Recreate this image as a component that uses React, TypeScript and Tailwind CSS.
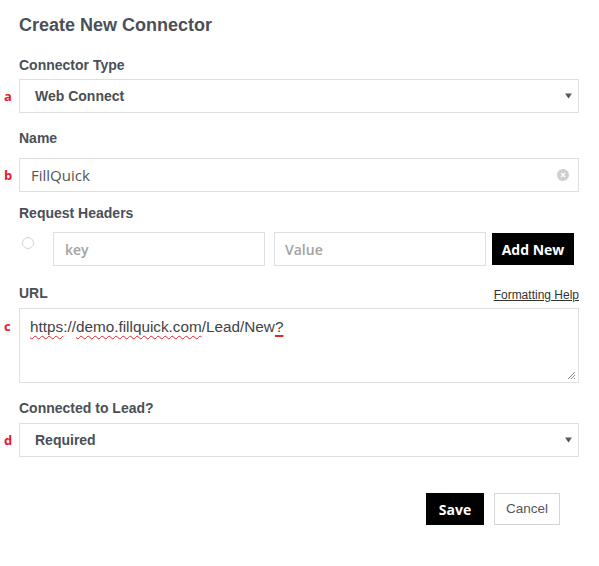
const label = "block font-['Liberation_Sans',Arial,sans-serif] font-bold text-[14px] leading-[20px] text-[#4b4f56]";
const box = "h-[34px] w-full border border-[#dcdfe3] bg-white";

function Marker({ ch }: { ch: string }) {
  return (
    <span className="block w-[19px] shrink-0 pl-[4px] font-['Open_Sans',sans-serif] text-[13px] font-bold leading-none text-[#e8192c]">
      {ch}
    </span>
  );
}

function Caret() {
  return (
    <svg width="7" height="6" viewBox="0 0 7 6" className="shrink-0">
      <path d="M0 0.5h7L3.5 5.5z" fill="#555a60" />
    </svg>
  );
}

function Select({ value }: { value: string }) {
  return (
    <div className={`${box} flex items-center justify-between pl-[15px] pr-[6px]`}>
      <span className="font-['Liberation_Sans',Arial,sans-serif] text-[14px] font-bold text-[#4b4f56]">{value}</span>
      <Caret />
    </div>
  );
}

export default function App() {
  return (
    <div className="h-[566px] w-[599px] bg-white pl-[19px] pt-[14px]">
      <div className="w-[560px]">
        <h1 className="font-['Liberation_Sans',Arial,sans-serif] text-[18px] font-bold leading-[22px] text-[#4b4f56]">
          Create New Connector
        </h1>

        <label className={`${label} mt-[19px]`}>Connector Type</label>
        <div className="-ml-[19px] mt-[4px] flex items-center">
          <Marker ch="a" />
          <Select value="Web Connect" />
        </div>

        <label className={`${label} mt-[15px]`}>Name</label>
        <div className="-ml-[19px] mt-[10px] flex items-center">
          <Marker ch="b" />
          <div className={`${box} flex items-center justify-between pl-[11px] pr-[9px]`}>
            <span className="font-['Open_Sans',sans-serif] text-[15px] text-[#555]">FillQuick</span>
            <span className="flex h-[12px] w-[12px] items-center justify-center rounded-full bg-[#cfcfcf]">
              <svg width="6" height="6" viewBox="0 0 6 6">
                <path d="M1 1l4 4M5 1L1 5" stroke="#fff" strokeWidth="1.4" />
              </svg>
            </span>
          </div>
        </div>

        <label className={`${label} mt-[11px]`}>Request Headers</label>
        <div className="mt-[9px] flex items-start">
          <span className="ml-[3px] mt-[5px] h-[12px] w-[12px] rounded-full border border-[#d4d4d4]" />
          <div className="ml-[19px] flex h-[34px] w-[212px] items-center border border-[#dcdfe3] pl-[11px] font-['Open_Sans',sans-serif] text-[14px] font-semibold text-[#a3a3a3]">
            key
          </div>
          <div className="ml-[9px] flex h-[34px] w-[212px] items-center border border-[#dcdfe3] pl-[10px] font-['Open_Sans',sans-serif] text-[14px] font-semibold text-[#a3a3a3]">
            Value
          </div>
          <button className="ml-[6px] mt-px flex h-[32px] w-[82px] items-center justify-center bg-black font-['Open_Sans',sans-serif] text-[14px] font-bold text-white">
            Add New
          </button>
        </div>

        <div className="mt-[17px] flex items-end justify-between">
          <label className={label}>URL</label>
          <a className="font-['Liberation_Sans',Arial,sans-serif] text-[12px] leading-[16px] text-[#333] underline">
            Formatting Help
          </a>
        </div>
        <div className="-ml-[19px] mt-[5px] flex items-start">
          <div className="w-[19px] shrink-0 pt-[12px]">
            <Marker ch="c" />
          </div>
          <div className="relative h-[75px] w-full border border-[#dcdfe3] bg-white pl-[10px] pt-[8px] font-['Liberation_Sans',Arial,sans-serif] text-[15.3px] leading-[20px] text-[#3f4348]">
            <span className="underline decoration-[#e0262b] decoration-wavy decoration-1 underline-offset-[3px]">https</span>
            ://
            <span className="underline decoration-[#e0262b] decoration-wavy decoration-1 underline-offset-[3px]">demo.fillquick.com</span>
            /Lead/New
            <span className="underline decoration-[#e0262b] decoration-2 underline-offset-[3px]">?</span>
            <svg width="9" height="9" viewBox="0 0 9 9" className="absolute bottom-[2px] right-[2px]">
              <path d="M8 1L1 8M8 4L4 8M8 7L7 8" stroke="#888" strokeWidth="1" />
            </svg>
          </div>
        </div>

        <label className={`${label} mt-[15px]`}>Connected to Lead?</label>
        <div className="-ml-[19px] mt-[5px] flex items-center">
          <Marker ch="d" />
          <Select value="Required" />
        </div>

        <div className="mt-[36px] flex justify-end gap-[10px] pr-[19px]">
          <button className="h-[32px] w-[58px] bg-black font-['Open_Sans',sans-serif] text-[14px] font-bold text-white">
            Save
          </button>
          <button className="h-[32px] w-[66px] border border-[#d6d6d6] bg-white font-['Liberation_Sans',Arial,sans-serif] text-[13.5px] text-[#555]">
            Cancel
          </button>
        </div>
      </div>
    </div>
  );
}
